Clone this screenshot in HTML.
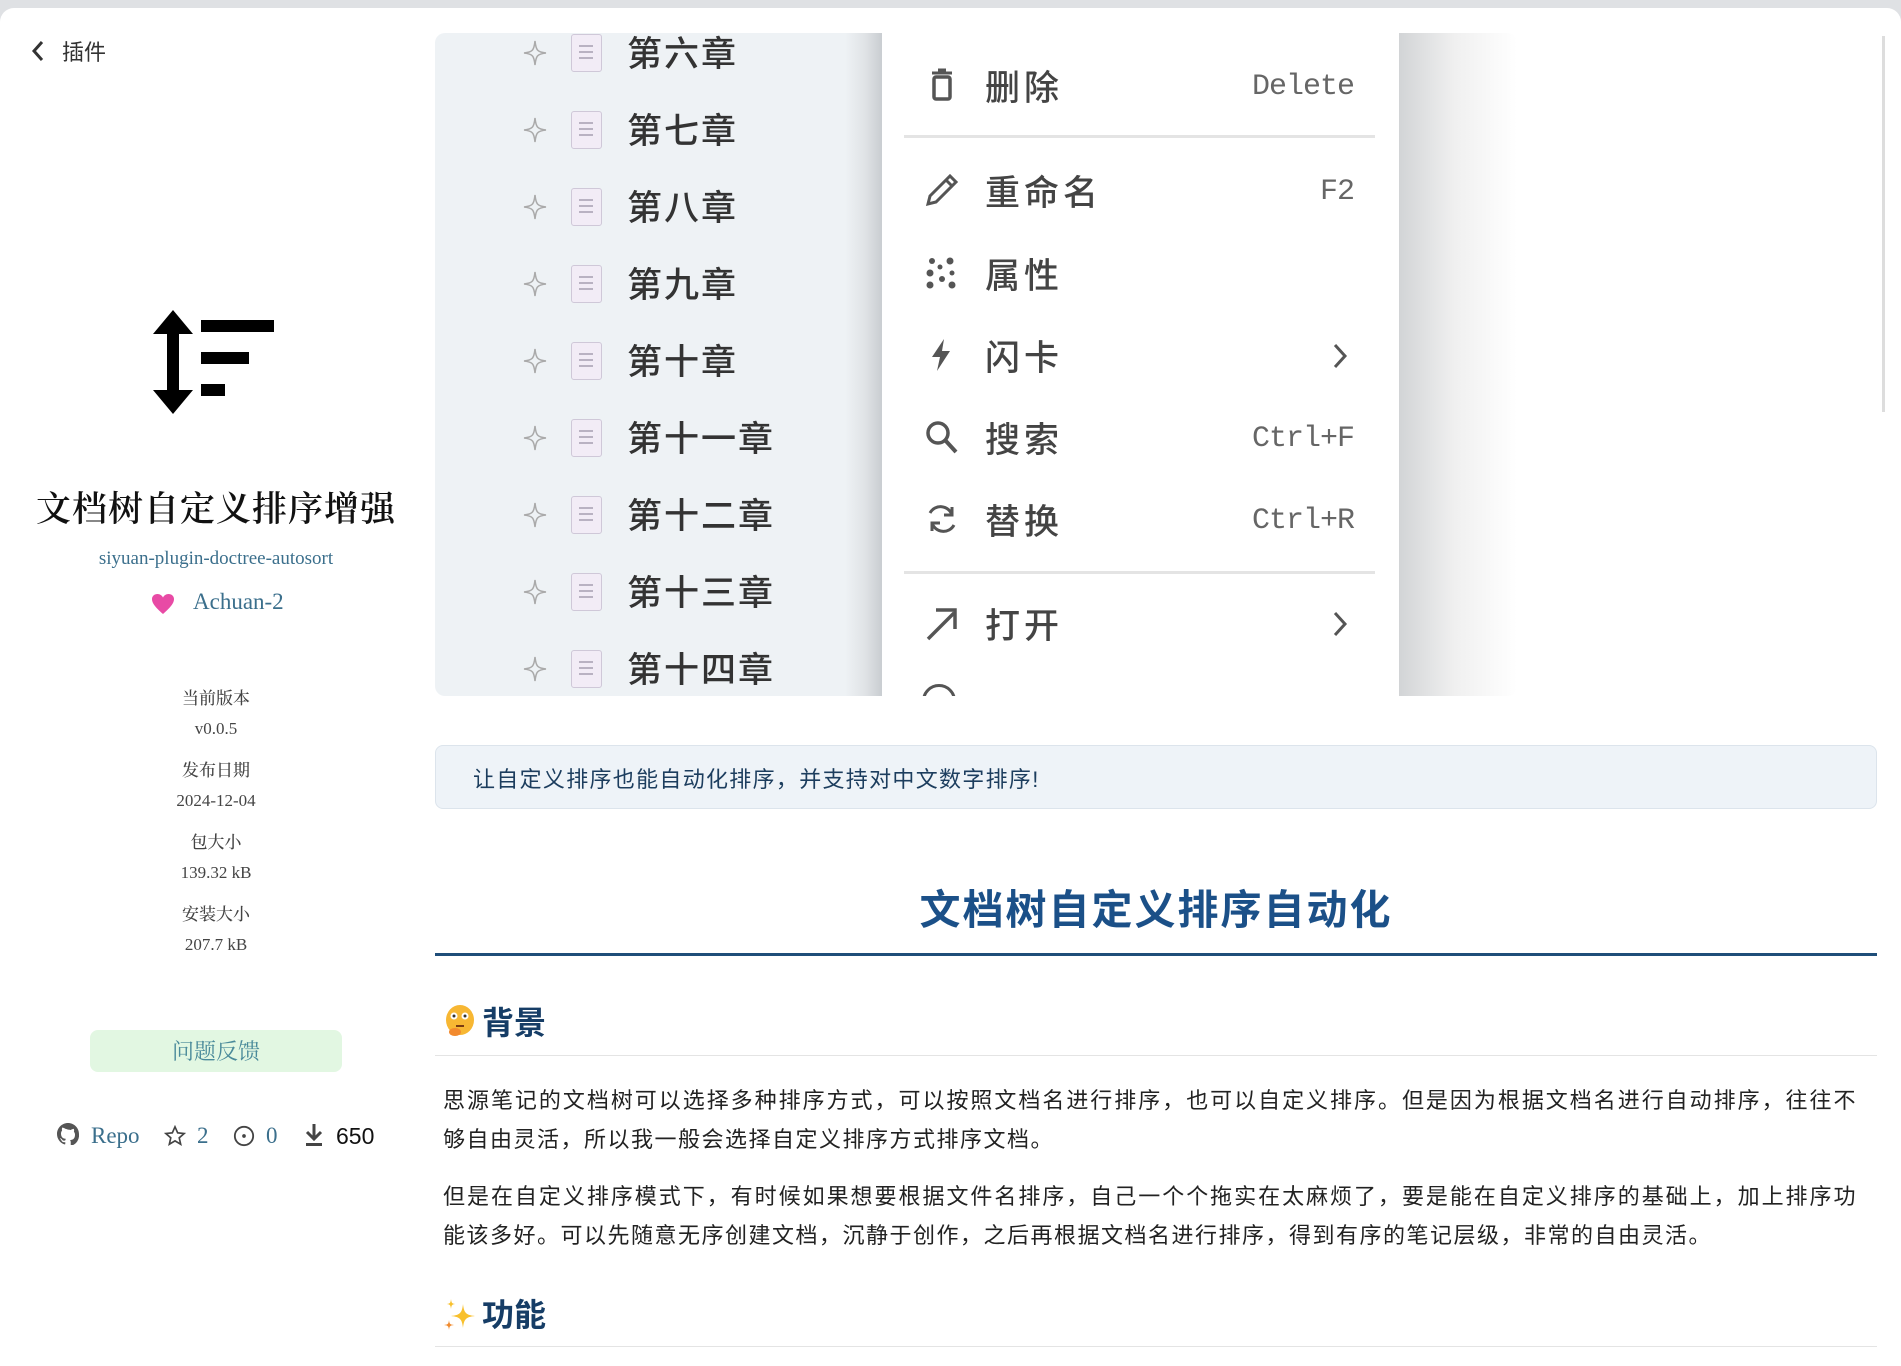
<!DOCTYPE html>
<html><head><meta charset="utf-8"><style>
*{margin:0;padding:0;box-sizing:border-box}
body{width:1901px;height:1366px;overflow:hidden;background:#dfe1e4;font-family:"Liberation Serif","Noto Serif CJK SC",serif;position:relative}
.page{position:absolute;left:0;top:8px;width:1901px;height:1358px;background:#fff;border-radius:14px 14px 0 0}
.a{position:absolute}
.cjk{font-family:"Liberation Sans","Noto Sans CJK SC",sans-serif}
.meta{position:absolute;left:116px;width:200px;text-align:center;font-size:17px;color:#444;line-height:20px;font-family:"Liberation Serif","Noto Serif CJK SC",serif;font-weight:500}
.ch{position:absolute;left:435px;height:60px;width:440px}
.ch .st{position:absolute;left:88px;top:14px}
.ch .dc{position:absolute;left:136px;top:8px;width:31px;height:38px;background:#f2ecf6;border:1.5px solid #cfc8d8;border-radius:3px}
.ch .dc i{position:absolute;left:7px;width:14px;height:1.5px;background:#b9b2c2}
.ch .t{position:absolute;left:192px;top:0px;font-size:35px;color:#333;font-family:"Noto Sans CJK SC",sans-serif;font-weight:500;letter-spacing:2px}
.mi{position:absolute;left:882px;width:480px;height:60px}
.mi .ic{position:absolute;left:42px;top:12px;width:36px;height:36px}
.mi .t{position:absolute;left:103px;top:5px;font-size:35px;color:#444;font-family:"Noto Sans CJK SC",sans-serif;font-weight:500;letter-spacing:4px}
.mi .k{position:absolute;right:8px;top:15px;font-size:30px;color:#666;font-family:"Liberation Mono",monospace;letter-spacing:-1px}
.ln{position:absolute;left:443px;width:1414px;font-size:22px;letter-spacing:1.5px;color:#222;font-family:"Liberation Sans","Noto Sans CJK SC",sans-serif;white-space:nowrap}
.j{text-align:justify;text-align-last:justify;white-space:normal}
</style></head><body>
<div class="page">
<svg class="a" style="left:30px;top:32px" width="16" height="22" viewBox="0 0 16 22"><path d="M12 2 L4 11 L12 20" stroke="#333" stroke-width="3" fill="none"/></svg>
<div class="a cjk" style="left:62px;top:27px;font-size:22px;color:#333">插件</div>
<svg class="a" style="left:150px;top:302px" width="130" height="110" viewBox="0 0 130 110">
<polygon points="23,0 43,24 29,24 29,80 43,80 23,104 3,80 17,80 17,24 3,24" fill="#000"/>
<rect x="51" y="10" width="73" height="12" fill="#000"/>
<rect x="51" y="42" width="48" height="12" fill="#000"/>
<rect x="51" y="74" width="24" height="12" fill="#000"/>
</svg>
<div class="a" style="left:0;width:432px;top:474px;text-align:center;font-size:35px;color:#111;font-family:'Noto Serif CJK SC',serif;font-weight:600;letter-spacing:1px">文档树自定义排序增强</div>
<div class="a" style="left:0;width:432px;top:540px;text-align:center;font-size:19px;color:#3b6f8c">siyuan-plugin-doctree-autosort</div>
<svg class="a" style="left:151px;top:585px" width="24" height="22" viewBox="0 0 24 22"><path d="M12 21 C4 14 1 10 1 6 C1 3 3.5 1 6.5 1 C9 1 11 2.5 12 4.5 C13 2.5 15 1 17.5 1 C20.5 1 23 3 23 6 C23 10 20 14 12 21Z" fill="#e84aa5"/></svg>
<div class="a" style="left:193px;top:581px;font-size:23px;color:#3b6f8c">Achuan-2</div>
<div class="meta" style="top:681px">当前版本</div>
<div class="meta" style="top:711px">v0.0.5</div>
<div class="meta" style="top:753px">发布日期</div>
<div class="meta" style="top:783px">2024-12-04</div>
<div class="meta" style="top:825px">包大小</div>
<div class="meta" style="top:855px">139.32 kB</div>
<div class="meta" style="top:897px">安装大小</div>
<div class="meta" style="top:927px">207.7 kB</div>
<div class="a" style="left:90px;top:1022px;width:252px;height:42px;background:#e2f7e2;border-radius:8px;text-align:center;line-height:42px;font-size:22px;color:#4a8a9a;font-family:'Noto Serif CJK SC',serif">问题反馈</div>
<svg class="a" style="left:57px;top:1115px" width="22" height="22" viewBox="0 0 16 16"><path fill="#555" d="M8 0C3.58 0 0 3.58 0 8c0 3.54 2.29 6.53 5.47 7.59.4.07.55-.17.55-.38v-1.330c-2.23.48-2.700-1.070-2.700-1.070-.36-.92-.89-1.170-.89-1.170-.73-.5.05-.49.05-.49.8.06 1.230.83 1.230.83.72 1.220 1.870.87 2.330.66.07-.52.28-.87.51-1.070-1.780-.2-3.640-.89-3.640-3.950 0-.87.31-1.590.82-2.150-.08-.2-.36-1.020.08-2.120 0 0 .67-.21 2.2.82A7.6 7.6 0 0 1 8 4.8c.68 0 1.360.09 2 .27 1.530-1.040 2.2-.82 2.2-.82.44 1.1.16 1.920.08 2.120.51.56.82 1.270.82 2.150 0 3.070-1.870 3.750-3.650 3.950.29.25.54.73.54 1.480v2.2c0 .21.15.46.55.38A8 8 0 0 0 16 8c0-4.420-3.580-8-8-8z"/></svg>
<div class="a" style="left:91px;top:1115px;font-size:23px;color:#3b6f8c">Repo</div>
<svg class="a" style="left:164px;top:1117px" width="22" height="22" viewBox="0 0 24 24"><path d="M12 2 L14.9 8.6 L22 9.3 L16.6 14 L18.2 21 L12 17.3 L5.8 21 L7.4 14 L2 9.3 L9.1 8.6Z" fill="none" stroke="#444" stroke-width="1.8"/></svg>
<div class="a" style="left:197px;top:1115px;font-size:23px;color:#3b6f8c">2</div>
<svg class="a" style="left:233px;top:1117px" width="22" height="22" viewBox="0 0 24 24"><circle cx="12" cy="12" r="10" fill="none" stroke="#444" stroke-width="2"/><circle cx="12" cy="12" r="2" fill="#444"/></svg>
<div class="a" style="left:266px;top:1115px;font-size:23px;color:#3b6f8c">0</div>
<svg class="a" style="left:303px;top:1115px" width="22" height="24" viewBox="0 0 22 24"><path d="M11 1 V15 M4 9 L11 16 L18 9" stroke="#444" stroke-width="3" fill="none"/><rect x="3" y="20" width="16" height="3" fill="#444"/></svg>
<div class="a cjk" style="left:336px;top:1115px;font-size:23px;color:#111">650</div>

<div class="a" style="left:435px;top:25px;width:1082px;height:663px;border-radius:10px;overflow:hidden;background:linear-gradient(90deg,#eef2f5 0,#eef2f5 410px,#e0e3e6 430px,#c9cdd1 447px,#fff 447px,#fff 964px,#d2d4d6 964px,#f0f0f0 1020px,#fff 1082px)"></div>
<div class="ch" style="top:18px"><svg class="st" width="24" height="26" viewBox="0 0 24 26"><path d="M12 1 C13 10 14 12 23 13 C14 14 13 16 12 25 C11 16 10 14 1 13 C10 12 11 10 12 1Z" fill="none" stroke="#aaa" stroke-width="1.5"/></svg><div class="dc"><i style="top:10px"></i><i style="top:16px"></i><i style="top:22px"></i></div><div class="t">第六章</div></div>
<div class="ch" style="top:95px"><svg class="st" width="24" height="26" viewBox="0 0 24 26"><path d="M12 1 C13 10 14 12 23 13 C14 14 13 16 12 25 C11 16 10 14 1 13 C10 12 11 10 12 1Z" fill="none" stroke="#aaa" stroke-width="1.5"/></svg><div class="dc"><i style="top:10px"></i><i style="top:16px"></i><i style="top:22px"></i></div><div class="t">第七章</div></div>
<div class="ch" style="top:172px"><svg class="st" width="24" height="26" viewBox="0 0 24 26"><path d="M12 1 C13 10 14 12 23 13 C14 14 13 16 12 25 C11 16 10 14 1 13 C10 12 11 10 12 1Z" fill="none" stroke="#aaa" stroke-width="1.5"/></svg><div class="dc"><i style="top:10px"></i><i style="top:16px"></i><i style="top:22px"></i></div><div class="t">第八章</div></div>
<div class="ch" style="top:249px"><svg class="st" width="24" height="26" viewBox="0 0 24 26"><path d="M12 1 C13 10 14 12 23 13 C14 14 13 16 12 25 C11 16 10 14 1 13 C10 12 11 10 12 1Z" fill="none" stroke="#aaa" stroke-width="1.5"/></svg><div class="dc"><i style="top:10px"></i><i style="top:16px"></i><i style="top:22px"></i></div><div class="t">第九章</div></div>
<div class="ch" style="top:326px"><svg class="st" width="24" height="26" viewBox="0 0 24 26"><path d="M12 1 C13 10 14 12 23 13 C14 14 13 16 12 25 C11 16 10 14 1 13 C10 12 11 10 12 1Z" fill="none" stroke="#aaa" stroke-width="1.5"/></svg><div class="dc"><i style="top:10px"></i><i style="top:16px"></i><i style="top:22px"></i></div><div class="t">第十章</div></div>
<div class="ch" style="top:403px"><svg class="st" width="24" height="26" viewBox="0 0 24 26"><path d="M12 1 C13 10 14 12 23 13 C14 14 13 16 12 25 C11 16 10 14 1 13 C10 12 11 10 12 1Z" fill="none" stroke="#aaa" stroke-width="1.5"/></svg><div class="dc"><i style="top:10px"></i><i style="top:16px"></i><i style="top:22px"></i></div><div class="t">第十一章</div></div>
<div class="ch" style="top:480px"><svg class="st" width="24" height="26" viewBox="0 0 24 26"><path d="M12 1 C13 10 14 12 23 13 C14 14 13 16 12 25 C11 16 10 14 1 13 C10 12 11 10 12 1Z" fill="none" stroke="#aaa" stroke-width="1.5"/></svg><div class="dc"><i style="top:10px"></i><i style="top:16px"></i><i style="top:22px"></i></div><div class="t">第十二章</div></div>
<div class="ch" style="top:557px"><svg class="st" width="24" height="26" viewBox="0 0 24 26"><path d="M12 1 C13 10 14 12 23 13 C14 14 13 16 12 25 C11 16 10 14 1 13 C10 12 11 10 12 1Z" fill="none" stroke="#aaa" stroke-width="1.5"/></svg><div class="dc"><i style="top:10px"></i><i style="top:16px"></i><i style="top:22px"></i></div><div class="t">第十三章</div></div>
<div class="ch" style="top:634px;height:54px;overflow:hidden"><svg class="st" width="24" height="26" viewBox="0 0 24 26"><path d="M12 1 C13 10 14 12 23 13 C14 14 13 16 12 25 C11 16 10 14 1 13 C10 12 11 10 12 1Z" fill="none" stroke="#aaa" stroke-width="1.5"/></svg><div class="dc"><i style="top:10px"></i><i style="top:16px"></i><i style="top:22px"></i></div><div class="t">第十四章</div></div>

<div class="mi" style="top:47px"><svg class="ic" viewBox="0 0 36 36"><path d="M8 6 H28 M14 3 H22" stroke="#555" stroke-width="3"/><rect x="10" y="10" width="16" height="22" rx="2" fill="none" stroke="#555" stroke-width="3.5"/></svg><div class="t">删除</div><div class="k">Delete</div></div>
<div class="a" style="left:904px;top:127px;width:471px;height:3px;background:#e4e4e4"></div>
<div class="mi" style="top:152px"><svg class="ic" viewBox="0 0 36 36"><path d="M4 32 L6 24 L26 4 L32 10 L12 30Z M22 8 L28 14" stroke="#555" stroke-width="3" fill="none"/></svg><div class="t">重命名</div><div class="k">F2</div></div>
<div class="mi" style="top:235px"><svg class="ic" viewBox="0 0 36 36"><g fill="#555"><circle cx="8" cy="6" r="3"/><circle cx="26" cy="6" r="3.5"/><circle cx="16" cy="12" r="2.5"/><circle cx="6" cy="18" r="3.5"/><circle cx="28" cy="18" r="2.5"/><circle cx="18" cy="24" r="3"/><circle cx="6" cy="30" r="3.5"/><circle cx="28" cy="30" r="3.5"/></g></svg><div class="t">属性</div></div>
<div class="mi" style="top:317px"><svg class="ic" viewBox="0 0 36 36"><path d="M20 2 L8 20 H16 L13 34 L26 14 H18 Z" fill="#555"/></svg><div class="t">闪卡</div><svg class="a" style="right:14px;top:18px" width="16" height="26" viewBox="0 0 16 26"><path d="M3 2 L13 13 L3 24" stroke="#555" stroke-width="3" fill="none"/></svg></div>
<div class="mi" style="top:399px"><svg class="ic" viewBox="0 0 36 36"><circle cx="14" cy="14" r="10" fill="none" stroke="#555" stroke-width="3.5"/><path d="M21 21 L32 33" stroke="#555" stroke-width="4"/></svg><div class="t">搜索</div><div class="k">Ctrl+F</div></div>
<div class="mi" style="top:481px"><svg class="ic" viewBox="0 0 36 36"><path d="M28 14 A12 12 0 0 0 6 12 M8 22 A12 12 0 0 0 30 24" stroke="#555" stroke-width="3" fill="none"/><path d="M28 6 V14 H20 M8 30 V22 H16" stroke="#555" stroke-width="3" fill="none"/></svg><div class="t">替换</div><div class="k">Ctrl+R</div></div>
<div class="a" style="left:904px;top:563px;width:471px;height:3px;background:#e4e4e4"></div>
<div class="mi" style="top:585px"><svg class="ic" viewBox="0 0 36 36"><path d="M4 34 L30 8 M12 5 H31 V24" stroke="#555" stroke-width="3.5" fill="none"/></svg><div class="t">打开</div><svg class="a" style="right:14px;top:18px" width="16" height="26" viewBox="0 0 16 26"><path d="M3 2 L13 13 L3 24" stroke="#555" stroke-width="3" fill="none"/></svg></div>
<div class="a" style="left:922px;top:676px;width:40px;height:12px;overflow:hidden"><div style="width:34px;height:34px;border:3px solid #555;border-radius:50%"></div></div>

<div class="a" style="left:1882px;top:28px;width:3px;height:376px;background:#ddd"></div>

<div class="a" style="left:435px;top:737px;width:1442px;height:64px;background:#eef3f8;border:1px solid #dce4ec;border-radius:8px"></div>
<div class="a cjk" style="left:473px;top:754px;font-size:22px;color:#1c3d5e;letter-spacing:1.3px">让自定义排序也能自动化排序，并支持对中文数字排序!</div>

<div class="a" style="left:435px;width:1442px;top:868px;text-align:center;font-size:41px;font-weight:bold;color:#1b5088;font-family:'Noto Sans CJK SC',sans-serif;letter-spacing:2px">文档树自定义排序自动化</div>
<div class="a" style="left:435px;top:945px;width:1442px;height:3px;background:#1f4e79"></div>

<svg class="a" style="left:444px;top:996px" width="32" height="34" viewBox="0 0 32 34"><ellipse cx="16" cy="16" rx="14" ry="15" fill="#f7b733"/><circle cx="10" cy="12" r="3.5" fill="#fff"/><circle cx="21" cy="12" r="3.5" fill="#fff"/><circle cx="10" cy="12" r="1.5" fill="#333"/><circle cx="21" cy="12" r="1.5" fill="#333"/><path d="M12 22 H20" stroke="#7a3b12" stroke-width="2"/><ellipse cx="11" cy="28" rx="6" ry="4" fill="#f28a2e"/></svg>
<div class="a" style="left:482px;top:990px;font-size:32px;font-weight:bold;color:#163d66;font-family:'Noto Sans CJK SC',sans-serif">背景</div>
<div class="a" style="left:435px;top:1047px;width:1442px;height:1px;background:#e4e4e4"></div>

<div class="ln j" style="top:1075px">思源笔记的文档树可以选择多种排序方式，可以按照文档名进行排序，也可以自定义排序。但是因为根据文档名进行自动排序，往往不</div>
<div class="ln" style="top:1114px">够自由灵活，所以我一般会选择自定义排序方式排序文档。</div>
<div class="ln j" style="top:1171px">但是在自定义排序模式下，有时候如果想要根据文件名排序，自己一个个拖实在太麻烦了，要是能在自定义排序的基础上，加上排序功</div>
<div class="ln" style="top:1210px">能该多好。可以先随意无序创建文档，沉静于创作，之后再根据文档名进行排序，得到有序的笔记层级，非常的自由灵活。</div>

<svg class="a" style="left:443px;top:1290px" width="34" height="34" viewBox="0 0 34 34"><path d="M20 6 C21 15 23 17 32 18 C23 19 21 21 20 30 C19 21 17 19 8 18 C17 17 19 15 20 6Z" fill="#f8c02d"/><path d="M8 1 C8.5 5 9 5.5 12 6 C9 6.5 8.5 7 8 11 C7.5 7 7 6.5 4 6 C7 5.5 7.5 5 8 1Z" fill="#f8c02d"/><path d="M6 22 C6.5 26 7 26.5 11 27 C7 27.5 6.5 28 6 32 C5.5 28 5 27.5 1 27 C5 26.5 5.5 26 6 22Z" fill="#f08a2e"/></svg>
<div class="a" style="left:482px;top:1282px;font-size:32px;font-weight:bold;color:#163d66;font-family:'Noto Sans CJK SC',sans-serif">功能</div>
<div class="a" style="left:435px;top:1338px;width:1442px;height:1px;background:#e4e4e4"></div>
</div>
</body></html>
